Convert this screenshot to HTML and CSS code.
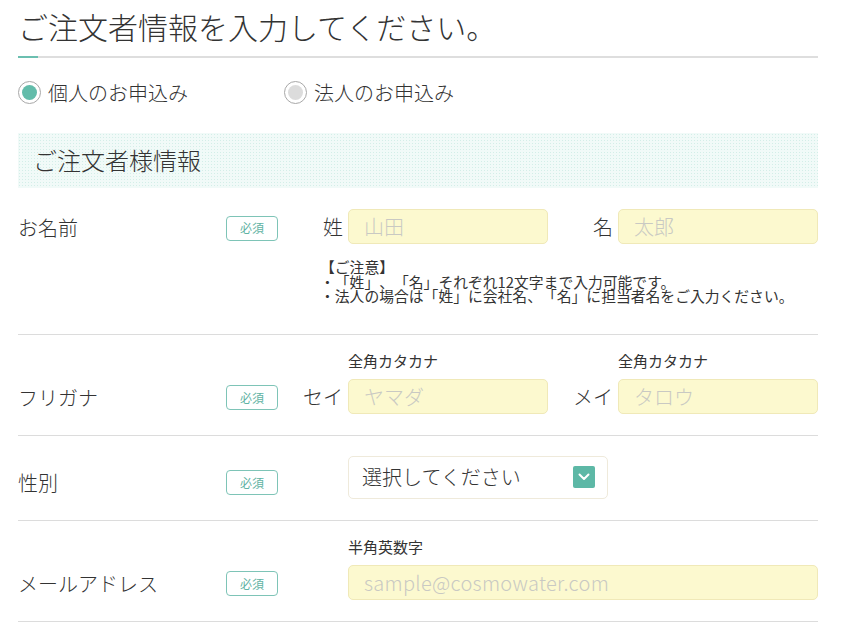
FILE: index.html
```html
<!DOCTYPE html>
<html lang="ja">
<head>
<meta charset="utf-8">
<title>ご注文者情報</title>
<link rel="stylesheet" href="styles.css">
</head>
<body>
<div class="page">
  <h1 class="title">ご注文者情報を入力してください。</h1>
  <div class="title-rule"></div>

  <div class="radios">
    <label class="radio radio--on"><span class="radio-dot"></span><span class="radio-text">個人のお申込み</span></label>
    <label class="radio"><span class="radio-dot"></span><span class="radio-text">法人のお申込み</span></label>
  </div>

  <h2 class="section">ご注文者様情報</h2>

  <div class="row row--name">
    <div class="head">
      <span class="label">お名前</span>
      <span class="badge">必須</span>
    </div>
    <div class="body">
      <div class="pairs">
        <div class="pair">
          <span class="pair-label">姓</span>
          <input class="input" type="text" placeholder="山田">
        </div>
        <div class="pair">
          <span class="pair-label">名</span>
          <input class="input" type="text" placeholder="太郎">
        </div>
      </div>
      <p class="note"><span class="note-line">【ご注意】</span><span class="note-line">・「姓」、「名」それぞれ12文字まで入力可能です。</span><span class="note-line">・法人の場合は「姓」に会社名、「名」に担当者名をご入力ください。</span></p>
    </div>
  </div>

  <div class="row row--caption">
    <div class="head">
      <span class="label">フリガナ</span>
      <span class="badge">必須</span>
    </div>
    <div class="body">
      <div class="pairs">
        <div class="pair">
          <span class="pair-label">セイ</span>
          <div class="field">
            <span class="caption">全角カタカナ</span>
            <input class="input" type="text" placeholder="ヤマダ">
          </div>
        </div>
        <div class="pair">
          <span class="pair-label">メイ</span>
          <div class="field">
            <span class="caption">全角カタカナ</span>
            <input class="input" type="text" placeholder="タロウ">
          </div>
        </div>
      </div>
    </div>
  </div>

  <div class="row row--select">
    <div class="head">
      <span class="label">性別</span>
      <span class="badge">必須</span>
    </div>
    <div class="body body--indent">
      <div class="select">
        <span class="select-text">選択してください</span>
        <span class="select-arrow"><svg width="12" height="8" viewBox="0 0 12 8"><polyline points="1.5,1.5 6,6 10.5,1.5" fill="none" stroke="#fff" stroke-width="2" stroke-linecap="round" stroke-linejoin="round"/></svg></span>
      </div>
    </div>
  </div>

  <div class="row row--caption">
    <div class="head">
      <span class="label">メールアドレス</span>
      <span class="badge">必須</span>
    </div>
    <div class="body body--indent">
      <div class="field">
        <span class="caption">半角英数字</span>
        <input class="input input--wide" type="text" placeholder="sample@cosmowater.com">
      </div>
    </div>
  </div>
</div>
</body>
</html>
```

FILE: styles.css
```css
* { box-sizing: border-box; }

html, body {
  margin: 0;
  padding: 0;
  background: #fff;
}

body {
  font-family: "Noto Sans CJK JP", "Noto Sans", sans-serif;
  color: #333;
  text-spacing-trim: space-all;
}

.page {
  width: 800px;
  margin-left: 18px;
  padding-top: 6px;
}

.title {
  margin: 0 0 10px;
  font-size: 30px;
  line-height: 40px;
  font-weight: 300;
  color: #333;
  white-space: nowrap;
}

.title-rule {
  height: 2px;
  background: linear-gradient(to right, #6bbfb0 0, #6bbfb0 20px, #dedede 20px);
}

.radios {
  display: flex;
  margin-top: 23px;
  height: 23px;
  align-items: center;
}

.radio {
  display: flex;
  align-items: center;
  width: 266px;
}

.radio-dot {
  width: 23px;
  height: 23px;
  border-radius: 50%;
  border: 1px solid #a8a8a8;
  background: #fff;
  display: flex;
  align-items: center;
  justify-content: center;
  flex: none;
}

.radio-dot::before {
  content: "";
  width: 15px;
  height: 15px;
  border-radius: 50%;
  background: #dcdcdc;
}

.radio--on .radio-dot::before {
  background: #62bcaa;
}

.radio-text {
  margin-left: 7px;
  font-size: 20px;
  line-height: 23px;
  font-weight: 300;
  color: #333;
}

.section {
  margin: 29px 0 0;
  height: 55px;
  padding-left: 15px;
  font-size: 24px;
  line-height: 53px;
  font-weight: 300;
  color: #333;
  background-color: #f1faf8;
  background-image: radial-gradient(circle, #d3eee8 0.8px, transparent 1px);
  background-size: 3px 3px;
}

.row {
  display: flex;
  align-items: flex-start;
  border-bottom: 1px solid #dcdcdc;
  padding: 21px 0 21px;
}

.row--name {
  padding-bottom: 30px;
}

.row--caption {
  padding-top: 15px;
}

.row--select {
  padding-top: 20px;
}

.head {
  display: flex;
  align-items: center;
  height: 35px;
  padding-top: 3px;
  flex: none;
}

.row--caption .head {
  margin-top: 29px;
}

.row--select .head {
  margin-top: 8px;
}

.label {
  width: 208px;
  font-size: 20px;
  line-height: 24px;
  font-weight: 300;
  color: #333;
}

.badge {
  width: 52px;
  height: 25px;
  border: 1px solid #7ec4b7;
  border-radius: 4px;
  display: flex;
  align-items: center;
  justify-content: center;
  font-size: 12px;
  color: #5fb3a3;
  line-height: 1;
}

.body {
  margin-left: 25px;
}

.body--indent {
  margin-left: 70px;
}

.pairs {
  display: flex;
  gap: 25px;
  align-items: flex-end;
}

.pair {
  display: flex;
  align-items: flex-end;
  gap: 5px;
}

.pair-label {
  width: 40px;
  text-align: right;
  font-size: 20px;
  line-height: 35px;
  height: 35px;
  font-weight: 300;
  color: #333;
}

.field {
  display: flex;
  flex-direction: column;
}

.caption {
  font-size: 15px;
  line-height: 22px;
  margin-bottom: 7px;
  color: #333;
}

.input {
  width: 200px;
  height: 35px;
  margin: 0;
  padding: 0 15px;
  border: 1px solid #f0e9b8;
  border-radius: 5px;
  background: #fcf9cf;
  font-family: "Noto Sans CJK JP", "Noto Sans", sans-serif;
  font-size: 20px;
  font-weight: 300;
  color: #333;
  outline: none;
}

.input::placeholder {
  color: #c9c9c3;
}

.input--wide {
  width: 470px;
  letter-spacing: 0.3px;
}

.note {
  margin: 16px 0 0;
  padding-left: 17px;
  font-size: 14.8px;
  color: #333;
  white-space: nowrap;
  display: flex;
  flex-direction: column;
}

.note-line {
  display: block;
  height: 14.5px;
  line-height: 14.5px;
}

.select {
  width: 260px;
  height: 43px;
  border: 1px solid #efeadb;
  border-radius: 5px;
  background: #fff;
  display: flex;
  align-items: center;
  justify-content: space-between;
  padding: 0 12px 0 13px;
}

.select-text {
  font-size: 20px;
  line-height: 24px;
  font-weight: 300;
  color: #333;
}

.select-arrow {
  width: 22px;
  height: 22px;
  border-radius: 2px;
  background: #5db8a6;
  display: flex;
  align-items: center;
  justify-content: center;
}
```
